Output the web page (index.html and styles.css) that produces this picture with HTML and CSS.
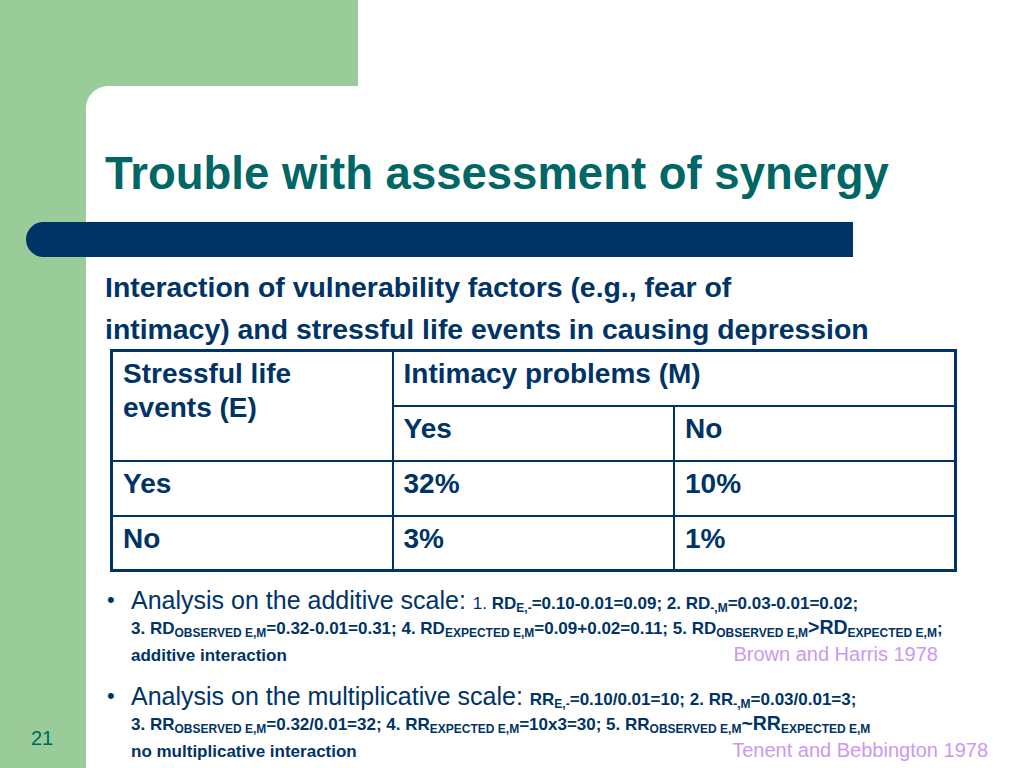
FILE: index.html
```html
<!DOCTYPE html>
<html lang="en">
<head>
<meta charset="utf-8">
<title>Trouble with assessment of synergy</title>
<link rel="stylesheet" href="styles.css">
</head>
<body>
<div class="slide">
  <aside class="rail"><span class="num">21</span></aside>
  <main class="panel">
    <h1 class="title">Trouble with assessment of synergy</h1>
    <div class="bar"></div>
    <p class="lead">Interaction of vulnerability factors (e.g., fear of<br>intimacy) and stressful life events in causing depression</p>
    <table class="grid">
      <tr>
        <td rowspan="2" class="c1">Stressful life<br>events (E)</td>
        <td colspan="2">Intimacy problems (M)</td>
      </tr>
      <tr>
        <td class="c2">Yes</td>
        <td class="c3">No</td>
      </tr>
      <tr>
        <td>Yes</td>
        <td>32%</td>
        <td>10%</td>
      </tr>
      <tr>
        <td>No</td>
        <td>3%</td>
        <td>1%</td>
      </tr>
    </table>
    <ul class="points">
      <li class="point">
        <div class="line1"><span class="big">Analysis on the additive scale: </span><span class="reg">1. </span><b>RD<sub>E,-</sub>=0.10-0.01=0.09; 2. RD<sub>-,M</sub>=0.03-0.01=0.02;</b></div>
        <div class="line2"><b>3. RD<sub>OBSERVED E,M</sub>=0.32-0.01=0.31; 4. RD<sub>EXPECTED E,M</sub>=0.09+0.02=0.11; 5. RD<sub>OBSERVED E,M</sub><span class="mid">&gt;RD</span><sub>EXPECTED E,M</sub>;</b></div>
        <div class="line3"><b>additive interaction</b><span class="cite cite-a">Brown and Harris 1978</span></div>
      </li>
      <li class="point">
        <div class="line1"><span class="big">Analysis on the multiplicative scale: </span><b>RR<sub>E,-</sub>=0.10/0.01=10; 2. RR<sub>-,M</sub>=0.03/0.01=3;</b></div>
        <div class="line2"><b>3. RR<sub>OBSERVED E,M</sub>=0.32/0.01=32; 4. RR<sub>EXPECTED E,M</sub>=10x3=30; 5. RR<sub>OBSERVED E,M</sub><span class="mid">~RR</span><sub>EXPECTED E,M</sub></b></div>
        <div class="line3"><b>no multiplicative interaction</b><span class="cite cite-b">Tenent and Bebbington 1978</span></div>
      </li>
    </ul>
  </main>
</div>
</body>
</html>
```

FILE: styles.css
```css
* { box-sizing: border-box; }
html, body { margin: 0; padding: 0; }
body {
  width: 1024px;
  height: 768px;
  overflow: hidden;
  font-family: "Liberation Sans", Arial, sans-serif;
  color: #003366;
}
.slide {
  width: 1024px;
  height: 768px;
  display: grid;
  grid-template-columns: 86px 1fr;
  padding-top: 86px;
  background: linear-gradient(to right, #99cc99 0, #99cc99 358px, #ffffff 358px);
}
.rail {
  display: flex;
  align-items: flex-end;
  justify-content: center;
  padding: 0 2px 30px 0;
}
.num {
  font-size: 20px;
  color: #006666;
  line-height: 1;
}
.panel {
  background: #ffffff;
  border-top-left-radius: 22px;
  padding: 65px 0 0 19px;
  min-width: 0;
}
.title {
  margin: 0;
  font-size: 45.5px;
  line-height: 1;
  font-weight: bold;
  color: #006666;
  white-space: nowrap;
}
.bar {
  margin: 25.5px 0 0 -79px;
  width: 827px;
  height: 35px;
  background: #003366;
  border-radius: 17.5px 0 0 17.5px;
}
.lead {
  margin: 9px 0 0 0;
  font-size: 28.4px;
  line-height: 42px;
  font-weight: bold;
  white-space: nowrap;
}
.grid {
  margin: -1px 0 0 5px;
  width: 847px;
  border-collapse: collapse;
  border: 3px solid #003366;
  font-size: 28px;
  font-weight: bold;
  table-layout: fixed;
}
.grid td {
  border: 2px solid #003366;
  height: 55px;
  padding: 5px 10px 0 10px;
  vertical-align: top;
  line-height: 34px;
}
.grid .c1 { width: 281px; }
.grid .c2 { width: 281px; }
.points {
  list-style: none;
  margin: 14px 0 0 0;
  padding: 0;
}
.point {
  position: relative;
  padding-left: 26px;
  margin-bottom: 10px;
}
.point::before {
  content: "\2022";
  position: absolute;
  left: 2px;
  top: 0;
  font-size: 22px;
  line-height: 28px;
}
.line1 {
  line-height: 28px;
  white-space: nowrap;
}
.big {
  font-size: 25px;
}
.reg {
  font-size: 17px;
}
.point b {
  font-size: 17px;
  font-weight: bold;
}
.mid { font-size: 19.5px; }
.point sub {
  font-size: 12px;
  vertical-align: -3px;
  line-height: 0;
}
.line2 {
  line-height: 18px;
  white-space: nowrap;
}
.line3 {
  display: flex;
  justify-content: space-between;
  align-items: baseline;
  line-height: 32px;
}
.cite {
  font-size: 20px;
  color: #cc99ee;
}
.cite-a { margin-right: 86px; }
.cite-b { margin-right: 36px; }
```
